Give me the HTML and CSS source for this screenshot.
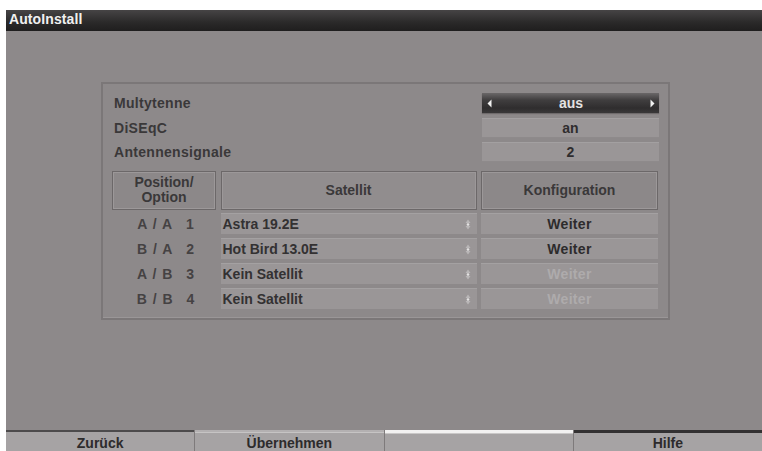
FILE: index.html
```html
<!DOCTYPE html>
<html lang="de">
<head>
<meta charset="utf-8">
<title>AutoInstall</title>
<link rel="stylesheet" href="styles.css">
</head>
<body>
<div class="screen">
  <div class="titlebar">AutoInstall</div>
  <div class="main">
    <div class="panel">
      <div class="setting">
        <span class="label">Multytenne</span>
        <div class="value selected">
          <svg class="arr" width="5" height="9" viewBox="0 0 5 9"><path d="M4.5 0.5 L0.5 4.5 L4.5 8.5 Z" fill="#f2f2f2"/></svg>
          <span>aus</span>
          <svg class="arr" width="5" height="9" viewBox="0 0 5 9"><path d="M0.5 0.5 L4.5 4.5 L0.5 8.5 Z" fill="#f2f2f2"/></svg>
        </div>
      </div>
      <div class="setting">
        <span class="label">DiSEqC</span>
        <div class="value">an</div>
      </div>
      <div class="setting">
        <span class="label">Antennensignale</span>
        <div class="value">2</div>
      </div>

      <div class="table">
        <div class="head">Position/<br>Option</div>
        <div class="head light">Satellit</div>
        <div class="head">Konfiguration</div>

        <div class="pos"><span>A / A</span><span>1</span></div>
        <div class="sat"><span>Astra 19.2E</span><svg class="ud" width="6" height="11" viewBox="0 0 6 11"><path d="M3 0.5 L5.5 4 L0.5 4 Z" fill="#b9b6b7"/><path d="M3 10.5 L5.5 7 L0.5 7 Z" fill="#b9b6b7"/><circle cx="3" cy="5.5" r="1.3" fill="#e6e4e4"/></svg></div>
        <div class="conf">Weiter</div>

        <div class="pos"><span>B / A</span><span>2</span></div>
        <div class="sat"><span>Hot Bird 13.0E</span><svg class="ud" width="6" height="11" viewBox="0 0 6 11"><path d="M3 0.5 L5.5 4 L0.5 4 Z" fill="#b9b6b7"/><path d="M3 10.5 L5.5 7 L0.5 7 Z" fill="#b9b6b7"/><circle cx="3" cy="5.5" r="1.3" fill="#e6e4e4"/></svg></div>
        <div class="conf">Weiter</div>

        <div class="pos"><span>A / B</span><span>3</span></div>
        <div class="sat"><span>Kein Satellit</span><svg class="ud" width="6" height="11" viewBox="0 0 6 11"><path d="M3 0.5 L5.5 4 L0.5 4 Z" fill="#b9b6b7"/><path d="M3 10.5 L5.5 7 L0.5 7 Z" fill="#b9b6b7"/><circle cx="3" cy="5.5" r="1.3" fill="#e6e4e4"/></svg></div>
        <div class="conf off">Weiter</div>

        <div class="pos"><span>B / B</span><span>4</span></div>
        <div class="sat"><span>Kein Satellit</span><svg class="ud" width="6" height="11" viewBox="0 0 6 11"><path d="M3 0.5 L5.5 4 L0.5 4 Z" fill="#b9b6b7"/><path d="M3 10.5 L5.5 7 L0.5 7 Z" fill="#b9b6b7"/><circle cx="3" cy="5.5" r="1.3" fill="#e6e4e4"/></svg></div>
        <div class="conf off">Weiter</div>
      </div>
    </div>
  </div>
  <div class="footer">
    <div class="btn red">Zurück</div>
    <div class="btn green">Übernehmen</div>
    <div class="btn yellow"></div>
    <div class="btn blue">Hilfe</div>
  </div>
</div>
</body>
</html>
```
FILE: styles.css
```css
html, body {
  margin: 0;
  padding: 0;
  background: #ffffff;
}

body {
  font-family: "Liberation Sans", Arial, sans-serif;
  font-weight: bold;
  font-size: 14px;
  color: #3a3839;
}

.screen {
  margin: 10px 0 0 6px;
  height: 441px;
  display: flex;
  flex-direction: column;
  background: #8d898a;
}

.titlebar {
  height: 21px;
  flex: none;
  background: linear-gradient(#464445, #2a2929 60%, #1f1e1e);
  color: #f0f0f0;
  line-height: 19px;
  padding-left: 3px;
  letter-spacing: 0.1px;
}

.main {
  flex: 1;
  padding: 51px 0 0 95px;
}

.panel {
  width: 546px;
  border: 2px solid #7b7778;
  box-shadow: inset 0 -1px 0 #9a9697;
  padding: 9px 10px 8px 9px;
  display: flex;
  flex-direction: column;
  gap: 4.5px;
}

.setting {
  height: 20px;
  display: flex;
  align-items: center;
  justify-content: space-between;
}

.label {
  padding-left: 2px;
  letter-spacing: 0.3px;
  color: #3a3839;
}

.value {
  width: 177px;
  height: 20px;
  margin-right: -1px;
  background: #9a9697;
  box-shadow: inset 0 1px 0 #a3a0a1, inset 0 -1px 0 #8e8a8b;
  display: flex;
  align-items: center;
  justify-content: center;
  color: #2f2d2e;
}

.value.selected {
  background: linear-gradient(#6a6768, #403e3f 35%, #2f2d2e 75%, #3a3839);
  box-shadow: 0 1px 1px #6f6b6c;
  color: #e4e2e2;
  justify-content: space-between;
  padding: 0 4px 0 5px;
  box-sizing: border-box;
}

.table {
  margin-top: 4.5px;
  display: grid;
  grid-template-columns: 104px 256px 177px;
  column-gap: 4.5px;
  row-gap: 3px;
  grid-template-rows: 39px repeat(4, 22px);
}

.table .head:nth-child(-n+3) {
  margin-bottom: 0.5px;
}

.head {
  border: 1px solid #6c6869;
  box-shadow: inset 1px 1px 0 #9c9899, inset -1px -1px 0 #9c9899;
  background: #8c8889;
  display: flex;
  align-items: center;
  justify-content: center;
  text-align: center;
  line-height: 15px;
  color: #3a3839;
}

.head.light {
  background: #918d8e;
}

.pos {
  display: flex;
  align-items: center;
  justify-content: center;
  gap: 13px;
  letter-spacing: 1px;
  color: #454243;
  padding-left: 4px;
}

.sat {
  background: #9a9697;
  box-shadow: inset 0 1px 0 #a4a1a2, inset 0 -1px 0 #8d898a;
  display: flex;
  align-items: center;
  justify-content: space-between;
  padding: 0 6px 0 2px;
  color: #333132;
}

.conf {
  background: #9a9697;
  box-shadow: inset 0 1px 0 #a4a1a2, inset 0 -1px 0 #8d898a;
  display: flex;
  align-items: center;
  justify-content: center;
  letter-spacing: 0.3px;
  color: #2d2b2c;
}

.conf.off {
  color: #aeabac;
}

.footer {
  height: 21px;
  flex: none;
  display: flex;
  gap: 1px;
  background: #7e7a7b;
}

.btn {
  flex: 1;
  background: #a6a3a4;
  display: flex;
  align-items: center;
  justify-content: center;
  box-sizing: border-box;
  padding-top: 2px;
  color: #2d2b2c;
}

.btn.red {
  border-top: 2px solid #4d4b4c;
}

.btn.green {
  border-top: 2px solid #b3b0b1;
  box-shadow: inset 0 1px 0 #c6c4c4;
}

.btn.yellow {
  border-top: 3px solid #f2f1f1;
  box-shadow: inset 0 1px 0 #c9c7c7;
}

.btn.blue {
  border-top: 3px solid #333132;
}
```
